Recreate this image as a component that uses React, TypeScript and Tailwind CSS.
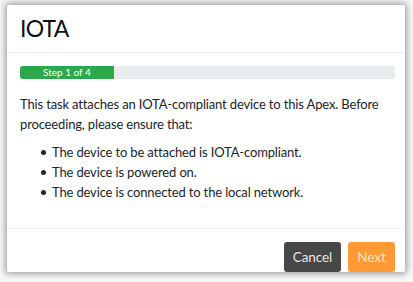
const items = [
  "The device to be attached is IOTA-compliant.",
  "The device is powered on.",
  "The device is connected to the local network.",
];

export default function App() {
  return (
    <div className="w-[413px] h-[282px] bg-[#f7f7f7] pt-[5px] pl-[7px] font-['Lato',sans-serif] text-[#212529]">
      <div className="w-[398px] h-[267px] bg-white rounded-[2px] shadow-[0_0_6px_2px_rgba(0,0,0,0.35)] overflow-hidden flex flex-col">
        <div className="h-[48px] border-b border-[#e9ecef] pl-[13px] flex items-center">
          <h1 className="text-[23px] leading-none tracking-[-0.8px] text-[#111]">IOTA</h1>
        </div>

        <div className="pl-[13px] pr-[10px] pt-[13px]">
          <div className="h-[13px] rounded-[3px] bg-[#e9ecef] overflow-hidden flex">
            <div className="w-1/4 bg-[#2ba84a] text-white text-[10px] leading-[13px] text-center">
              Step 1 of 4
            </div>
          </div>
          <p className="mt-[15px] text-[13px] leading-[20px] tracking-[-0.15px]">
            This task attaches an IOTA-compliant device to this Apex. Before proceeding, please ensure that:
          </p>
          <ul className="mt-[8px] pl-[21px] text-[13px] leading-[20px] tracking-[-0.15px]">
            {items.map((item) => (
              <li key={item} className="flex items-center">
                <span className="w-[5px] h-[5px] rounded-full bg-[#212529] mr-[6px]" />
                {item}
              </li>
            ))}
          </ul>
        </div>

        <div className="mt-auto border-t border-[#f0f0f0] pt-[13px] pr-[10px] flex justify-end gap-[7px]">
          <button className="w-[57px] h-[30px] rounded-[3px] bg-[#474747] text-[#e6e6e6] text-[13.5px] tracking-[-0.1px]">Cancel</button>
          <button className="w-[47px] h-[30px] rounded-[3px] bg-[#ff9933] text-[#ffe6b8] text-[13.5px] tracking-[-0.1px]">Next</button>
        </div>
      </div>
    </div>
  );
}
